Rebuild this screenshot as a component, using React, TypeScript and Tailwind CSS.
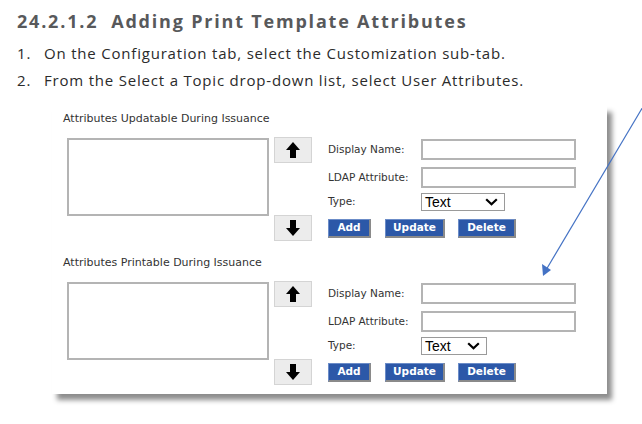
import React from 'react';

const ArrowBtn = ({ dir }: { dir: 'up' | 'down' }) => (
  <div className="w-[38px] h-[26px] bg-[#ececec] border border-[#d4d4d4] flex items-center justify-center">
    <svg width="14" height="16" viewBox="0 0 14 16" className={dir === 'down' ? 'rotate-180' : ''}>
      <path d="M7 0 L14 8 L10 8 L10 16 L4 16 L4 8 L0 8 Z" fill="#000" />
    </svg>
  </div>
);

const BlueBtn = ({ label, w }: { label: string; w: string }) => (
  <div
    className={`${w} h-[19px] bg-[#2c58a8] text-white text-[10.5px] font-bold flex items-center justify-center border-r-2 border-b-2 border-[#8a8a8a] border-t border-l border-t-[#6b8cc8] border-l-[#6b8cc8]`}
  >
    {label}
  </div>
);

const Chevron = () => (
  <svg width="13" height="8" viewBox="0 0 13 8">
    <path d="M1.2 1.2 L6.5 6.3 L11.8 1.2" stroke="#000" strokeWidth="2.2" fill="none" />
  </svg>
);

const Section = ({ title, selectW, first }: { title: string; selectW: string; first?: boolean }) => (
  <div className={first ? '' : 'mt-[15px]'}>
    <div className="text-[11px] text-[#333] leading-[13px]">{title}</div>
    <div className="flex mt-[12px]">
      <div className="w-[202px] h-[78px] mt-[1px] ml-[4px] border-2 border-[#b4b4b4] bg-white" />
      <div className="ml-[5px] h-[104px] flex flex-col justify-between">
        <ArrowBtn dir="up" />
        <ArrowBtn dir="down" />
      </div>
      <div className="ml-[16px] mt-[2px] flex flex-col">
        <div className="flex items-center h-[21px]">
          <span className="w-[93px] text-[10.5px] text-[#333]">Display Name:</span>
          <div className="w-[155px] h-[21px] border-2 border-[#b4b4b4] bg-white" />
        </div>
        <div className="flex items-center h-[21px] mt-[7px]">
          <span className="w-[93px] text-[10.5px] text-[#333] whitespace-nowrap">LDAP Attribute:</span>
          <div className="w-[155px] h-[21px] border-2 border-[#b4b4b4] bg-white" />
        </div>
        <div className="flex items-center h-[18px] mt-[5px]">
          <span className="w-[93px] text-[10.5px] text-[#333]">Type:</span>
          <div className={`${selectW} h-[18px] border border-[#9a9a9a] bg-white flex items-center justify-between pl-[3px] pr-[6px]`}>
            <span className="text-[14px] leading-none text-black" style={{ fontFamily: '"Liberation Sans", Arial, sans-serif' }}>Text</span>
            <Chevron />
          </div>
        </div>
        <div className="flex mt-[8px]">
          <BlueBtn label="Add" w="w-[43px]" />
          <div className="ml-[14px]"><BlueBtn label="Update" w="w-[60px]" /></div>
          <div className="ml-[13px]"><BlueBtn label="Delete" w="w-[58px]" /></div>
        </div>
      </div>
    </div>
  </div>
);

export default function App() {
  return (
    <div className="relative w-[642px] h-[424px] bg-white overflow-hidden">
      <div className="pl-[17px] pt-[8px]" style={{ fontFamily: '"Open Sans", "Noto Sans", sans-serif' }}>
        <h1 className="text-[18px] font-bold text-[#58595b] tracking-[1.8px] leading-[26px]">
          24.2.1.2&nbsp; Adding Print Template Attributes
        </h1>
        <ol className="mt-[6px] text-[15px] text-[#2b2b2b] tracking-[0.8px] leading-[27px]">
          <li className="flex">
            <span className="w-[27px]">1.</span>
            <span>On the Configuration tab, select the Customization sub-tab.</span>
          </li>
          <li className="flex">
            <span className="w-[27px]">2.</span>
            <span>From the Select a Topic drop-down list, select User Attributes.</span>
          </li>
        </ol>
      </div>

      <div
        className="ml-[52px] mt-[12px] w-[555px] h-[288px] bg-white pl-[11px] pt-[6px] shadow-[5px_6px_5px_rgba(0,0,0,0.45)]"
        style={{ fontFamily: '"DejaVu Sans", Verdana, sans-serif' }}
      >
        <Section title="Attributes Updatable During Issuance" selectW="w-[84px]" first />
        <Section title="Attributes Printable During Issuance" selectW="w-[66px]" />
      </div>

      <svg className="absolute left-0 top-0" width="642" height="424">
        <line x1="644" y1="105" x2="546" y2="270" stroke="#4472c4" strokeWidth="1.2" />
        <path d="M543 276 L542 264 L551 270 Z" fill="#4472c4" />
      </svg>
    </div>
  );
}
